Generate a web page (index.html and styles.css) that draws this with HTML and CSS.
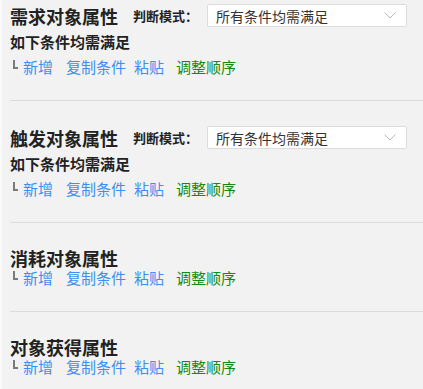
FILE: index.html
```html
<!DOCTYPE html>
<html lang="zh-CN">
<head>
    <meta charset="UTF-8">
    <meta name="viewport" content="width=device-width, initial-scale=1.0">
    <title>对象属性条件</title>
    <link rel="stylesheet" href="styles.css">
</head>
<body>
    <div class="panel">
        <div class="section first">
            <div class="head">
                <span class="title">需求对象属性</span>
                <span class="mode-label">判断模式：</span>
                <div class="select">
                    <span>所有条件均需满足</span>
                    <svg class="arrow" width="12" height="7" viewBox="0 0 12 7"><path d="M0.5 0.5 L6 6 L11.5 0.5" fill="none" stroke="#bbb" stroke-width="1"/></svg>
                </div>
            </div>
            <div class="cond">如下条件均需满足</div>
            <div class="ops">
                <span class="corner"></span><a class="op op-add">新增</a><a class="op">复制条件</a><a class="op op-paste">粘贴</a><a class="op op-sort">调整顺序</a>
            </div>
        </div>

        <div class="section">
            <div class="head">
                <span class="title">触发对象属性</span>
                <span class="mode-label">判断模式：</span>
                <div class="select">
                    <span>所有条件均需满足</span>
                    <svg class="arrow" width="12" height="7" viewBox="0 0 12 7"><path d="M0.5 0.5 L6 6 L11.5 0.5" fill="none" stroke="#bbb" stroke-width="1"/></svg>
                </div>
            </div>
            <div class="cond">如下条件均需满足</div>
            <div class="ops">
                <span class="corner"></span><a class="op op-add">新增</a><a class="op">复制条件</a><a class="op op-paste">粘贴</a><a class="op op-sort">调整顺序</a>
            </div>
        </div>

        <div class="section">
            <div class="head">
                <span class="title">消耗对象属性</span>
            </div>
            <div class="ops tight">
                <span class="corner"></span><a class="op op-add">新增</a><a class="op">复制条件</a><a class="op op-paste">粘贴</a><a class="op op-sort">调整顺序</a>
            </div>
        </div>

        <div class="section">
            <div class="head">
                <span class="title">对象获得属性</span>
            </div>
            <div class="ops tight">
                <span class="corner"></span><a class="op op-add">新增</a><a class="op">复制条件</a><a class="op op-paste">粘贴</a><a class="op op-sort">调整顺序</a>
            </div>
        </div>
    </div>
</body>
</html>
```

FILE: styles.css
```css
body {
    margin: 0;
    padding: 0;
    background-color: #f2f2f2;
    font-family: "Noto Sans CJK SC", "Noto Sans", sans-serif;
    color: #222;
}

.panel {
    border-left: 2px solid #fafafa;
    height: 389px;
    overflow: hidden;
}

.section {
    margin-left: 8px;
    padding: 25px 0 23px 0;
    border-bottom: 1px solid #dcdcdc;
}

.section.first {
    padding-top: 4px;
}

.head {
    display: flex;
    align-items: center;
    min-height: 20px;
}

.title {
    font-size: 18px;
    font-weight: bold;
    line-height: 20px;
    color: #222;
}

.mode-label {
    font-size: 13px;
    font-weight: bold;
    margin-left: 15px;
    color: #222;
}

.select {
    display: flex;
    align-items: center;
    justify-content: space-between;
    width: 200px;
    height: 23px;
    box-sizing: border-box;
    margin-left: 9px;
    padding: 0 10px 0 8px;
    background-color: #fff;
    border: 1px solid #dcdcdc;
    border-radius: 2px;
    font-size: 14px;
    color: #333;
}

.arrow {
    display: block;
}

.cond {
    font-size: 15px;
    font-weight: bold;
    line-height: 20px;
    margin-top: 5px;
}

.ops {
    font-size: 15px;
    line-height: 20px;
    margin-top: 5px;
    padding-left: 3px;
    white-space: nowrap;
}

.ops.tight {
    margin-top: 0;
}

.corner {
    display: inline-block;
    width: 3px;
    height: 7px;
    border-left: 2px solid #7a7a7a;
    border-bottom: 2px solid #7a7a7a;
    vertical-align: 4px;
    margin-right: 5px;
}

.op {
    color: #3d8ef0;
    margin-right: 8px;
    cursor: pointer;
}

.op-add {
    margin-right: 13px;
}

.op-paste {
    margin-right: 12px;
}

.op-sort {
    color: #138a13;
}
```
